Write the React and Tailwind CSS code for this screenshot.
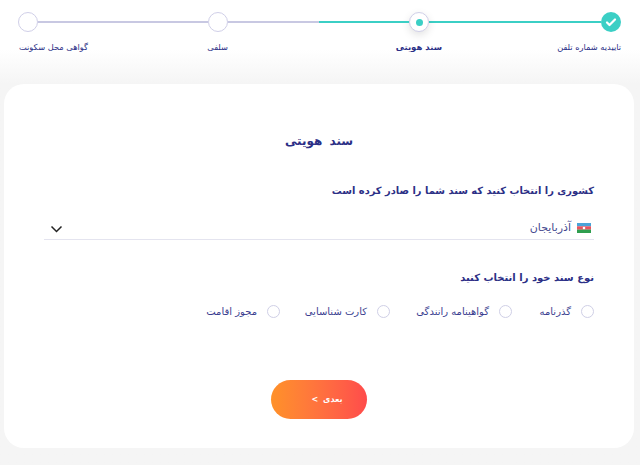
const steps = [
    { label: 'تاییدیه شماره تلفن', state: 'done' },
    { label: 'سند هویتی', state: 'current' },
    { label: 'سلفی', state: 'todo' },
    { label: 'گواهی محل سکونت', state: 'todo' },
];

const docTypes = ['گذرنامه', 'گواهینامه رانندگی', 'کارت شناسایی', 'مجوز اقامت'];

function StepCircle({ state }) {
    if (state === 'done') {
        return (
            <div className="w-5 h-5 rounded-full bg-[#3bcfc5] flex items-center justify-center shrink-0">
                <svg className="w-3 h-3" viewBox="0 0 24 24" fill="none" stroke="white" strokeWidth="4.5" strokeLinecap="round" strokeLinejoin="round">
                    <path d="M4 13l5 5L20 7" />
                </svg>
            </div>
        );
    }
    return (
        <div className={`w-5 h-5 rounded-full bg-white border border-[#d0cfe8] flex items-center justify-center shrink-0 ${state === 'current' ? 'shadow-[0_3px_8px_rgba(0,0,0,0.12)]' : ''}`}>
            {state === 'current' && <span className="w-[7px] h-[7px] rounded-full bg-[#3bcfc5]" />}
        </div>
    );
}

function Flag() {
    return (
        <svg className="w-[14px] h-[10px] shrink-0" viewBox="0 0 14 10">
            <rect width="14" height="3.4" fill="#4aa3d8" />
            <rect y="3.3" width="14" height="3.4" fill="#e8535f" />
            <rect y="6.6" width="14" height="3.4" fill="#2f9e4f" />
            <circle cx="7" cy="5" r="1.3" fill="white" />
        </svg>
    );
}

export default function App() {
    return (
        <div dir="rtl" className="w-[640px] h-[465px] overflow-hidden bg-gradient-to-b from-white from-[50px] to-[#f5f5f5] to-[84px] font-['DejaVu_Sans',sans-serif] text-[#2b2f86]">
            {/* Stepper */}
            <div className="w-[603px] mr-[19px] pt-3">
                <div className="flex items-center h-5">
                    <StepCircle state="done" />
                    <div className="w-[172px] h-0.5 bg-[#3bcfc5]" />
                    <StepCircle state="current" />
                    <div className="w-[90px] h-0.5 bg-[#3bcfc5]" />
                    <div className="w-[91px] h-0.5 bg-[#c8c8e2]" />
                    <StepCircle state="todo" />
                    <div className="w-[170px] h-0.5 bg-[#c8c8e2]" />
                    <StepCircle state="todo" />
                </div>
                <div className="grid grid-cols-[179px_214px_140px_70px] mt-[7px] h-[45px]">
                    {steps.map((s) => (
                        <span key={s.label} className={`whitespace-nowrap leading-4 ${s.state === 'current' ? 'text-[8.5px] font-bold' : 'text-[8.25px]'}`}>
                            {s.label}
                        </span>
                    ))}
                </div>
            </div>

            {/* Card */}
            <div className="w-[630px] h-[364px] mr-[6px] bg-white rounded-[20px] px-[40px] pt-[48px]">
                <h1 className="text-[12px] font-bold text-center leading-[18px] [word-spacing:3px]">سند هویتی</h1>

                <p className="mt-[33px] text-[9.9px] font-bold leading-4">کشوری را انتخاب کنید که سند شما را صادر کرده است</p>
                <div className="mt-[16px] h-[25px] pt-[2px] border-b border-[#e4e4ef] flex items-center gap-[6px] pr-[3px] pl-[6px] text-[11px] text-[#45498f]">
                    <Flag />
                    <span>آذربایجان</span>
                    <svg className="w-[13px] h-[8px] mr-auto mt-[2px]" viewBox="0 0 13 8" fill="none" stroke="#222" strokeWidth="1.5">
                        <path d="M1.5 1.5L6.5 6.5L11.5 1.5" />
                    </svg>
                </div>

                <p className="mt-[30px] text-[10px] font-bold leading-4">نوع سند خود را انتخاب کنید</p>
                <div className="mt-[18px] grid grid-cols-[82px_122px_110px_auto] text-[10px] text-[#3a3e90]">
                    {docTypes.map((t) => (
                        <label key={t} className="flex items-center gap-[10px] h-[14px] whitespace-nowrap">
                            <span className="w-[13px] h-[13px] rounded-full border border-[#cfcfe6] bg-white shrink-0" />
                            {t}
                        </label>
                    ))}
                </div>

                <div className="flex justify-center mt-[62px]">
                    <button className="w-24 h-[39px] pl-[16px] rounded-full bg-gradient-to-r from-[#ff9128] to-[#ff4b4b] text-white text-[8px] font-bold flex items-center justify-center gap-[5px]">
                        بعدی <span>&gt;</span>
                    </button>
                </div>
            </div>
        </div>
    );
}
